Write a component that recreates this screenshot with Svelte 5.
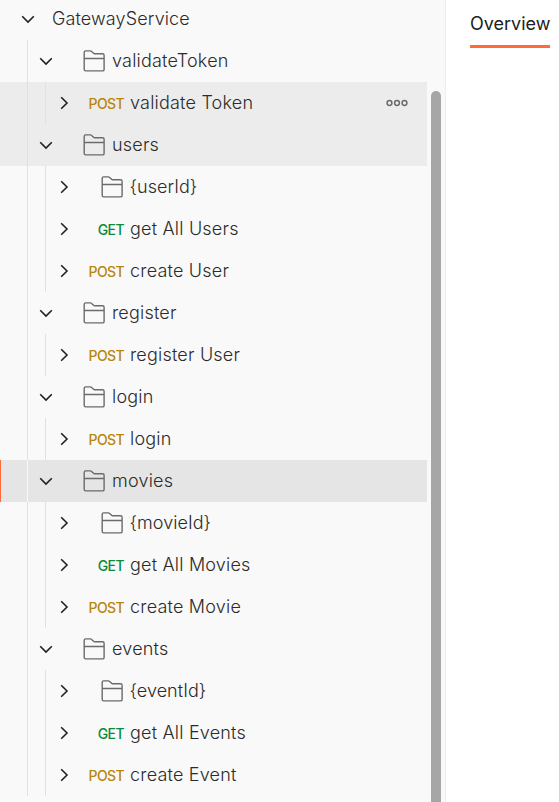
<script>
  const rows = [
    { level: 0, open: true, label: 'GatewayService' },
    { level: 1, open: true, folder: true, label: 'validateToken' },
    { level: 2, method: 'POST', label: 'validate Token', state: 'hover', more: true },
    { level: 1, open: true, folder: true, label: 'users', state: 'hover' },
    { level: 2, folder: true, label: '{userId}' },
    { level: 2, method: 'GET', label: 'get All Users' },
    { level: 2, method: 'POST', label: 'create User' },
    { level: 1, open: true, folder: true, label: 'register' },
    { level: 2, method: 'POST', label: 'register User' },
    { level: 1, open: true, folder: true, label: 'login' },
    { level: 2, method: 'POST', label: 'login' },
    { level: 1, open: true, folder: true, label: 'movies', state: 'selected' },
    { level: 2, folder: true, label: '{movieId}' },
    { level: 2, method: 'GET', label: 'get All Movies' },
    { level: 2, method: 'POST', label: 'create Movie' },
    { level: 1, open: true, folder: true, label: 'events' },
    { level: 2, folder: true, label: '{eventId}' },
    { level: 2, method: 'GET', label: 'get All Events' },
    { level: 2, method: 'POST', label: 'create Event' }
  ];
</script>

<div class="app">
  <aside class="sidebar">
    <div class="tree">
      {#each rows as row}
        <div class="row level-{row.level} {row.state ?? ''}">
          <span class="edge"></span>
          {#each { length: row.level } as _}
            <span class="guide"></span>
          {/each}
          <svg class="chevron" width="18" height="18" viewBox="0 0 18 18">
            {#if row.open}
              <path d="M3.2 6.2 9 12l5.8-5.8" />
            {:else}
              <path d="M6.2 3.2 12 9l-5.8 5.8" />
            {/if}
          </svg>
          {#if row.level > 0}
            <span class="kind">
              {#if row.folder}
                <svg class="folder" width="24" height="24" viewBox="0 0 24 24">
                  <path d="M2.2 20.5V3.4q0-1.5 1.5-1.5h4.7q.7 0 1.2.5l2 1.9q.4.4 1 .4h8q1.5 0 1.5 1.5v14.2q0 1.5-1.5 1.5H3.7q-1.5 0-1.5-1.4ZM2.2 9.5h19.9" />
                </svg>
              {:else}
                <span class="method {row.method.toLowerCase()}">{row.method}</span>
              {/if}
            </span>
          {/if}
          <span class="label" class:param={row.label.startsWith('{')}>{row.label}</span>
          {#if row.more}
            <svg class="more" width="24" height="8" viewBox="0 0 24 8">
              <circle cx="4.5" cy="4" r="2.4" />
              <circle cx="12" cy="4" r="2.4" />
              <circle cx="19.5" cy="4" r="2.4" />
            </svg>
          {/if}
        </div>
      {/each}
    </div>
    <div class="scroll"><div class="thumb"></div></div>
  </aside>
  <main>
    <div class="tab">Overview</div>
  </main>
</div>

<style>
  :global(body) {
    margin: 0;
  }
  .app {
    display: flex;
    width: 559px;
    height: 802px;
    overflow: hidden;
    background: #fff;
    font-family: Inter, sans-serif;
    font-size: 18px;
    color: #2b2b2b;
  }
  .sidebar {
    box-sizing: border-box;
    display: flex;
    width: 446px;
    flex: none;
    background: #f9f9f9;
    border-right: 1px solid #ededed;
  }
  .tree {
    width: 427px;
    margin-top: -2px;
  }
  .row {
    display: flex;
    align-items: center;
    height: 42px;
  }
  .hover {
    background: #ececec;
  }
  .selected {
    background: #e5e5e5;
  }
  .edge {
    width: 1px;
    height: 42px;
    margin-right: 18px;
    flex: none;
  }
  .selected .edge {
    background: #ff6c37;
  }
  .guide {
    box-sizing: border-box;
    width: 18px;
    height: 42px;
    padding-left: 8px;
    flex: none;
  }
  .guide::before {
    content: '';
    display: block;
    width: 1px;
    height: 100%;
    background: #e1e1e1;
  }
  .selected .guide::before {
    background: #f9f9f9;
  }
  .chevron {
    flex: none;
    fill: none;
    stroke: #212121;
    stroke-width: 1.6;
  }
  .kind {
    display: flex;
    justify-content: flex-end;
    align-items: center;
    width: 51px;
    margin-right: 6px;
    flex: none;
  }
  .folder {
    fill: none;
    stroke: #6b6b6b;
    stroke-width: 1.4;
  }
  .label {
    font-weight: 350;
    letter-spacing: 0.2px;
    line-height: 24px;
    white-space: nowrap;
  }
  .level-0 .label {
    margin-left: 15px;
    letter-spacing: 0.12px;
  }
  .param {
    margin-left: -0.5px;
    letter-spacing: 0.04px;
  }
  .method {
    font-size: 14px;
    font-weight: 550;
    letter-spacing: -0.6px;
  }
  .post {
    color: #b8860b;
  }
  .get {
    color: #0b8a3c;
  }
  .more {
    margin-left: auto;
    margin-right: 18px;
    fill: none;
    stroke: #6b6b6b;
    stroke-width: 1.5;
  }
  .scroll {
    width: 10px;
    margin-left: 4px;
    padding-top: 91px;
  }
  .thumb {
    height: 100%;
    border-radius: 5px 5px 0 0;
    background: #a6a6a6;
  }
  main {
    padding-left: 24px;
  }
  .tab {
    box-sizing: border-box;
    width: 80px;
    height: 48px;
    padding-top: 12px;
    border-bottom: 3px solid #ff6c37;
    color: #212121;
    line-height: 24px;
    white-space: nowrap;
  }
</style>
